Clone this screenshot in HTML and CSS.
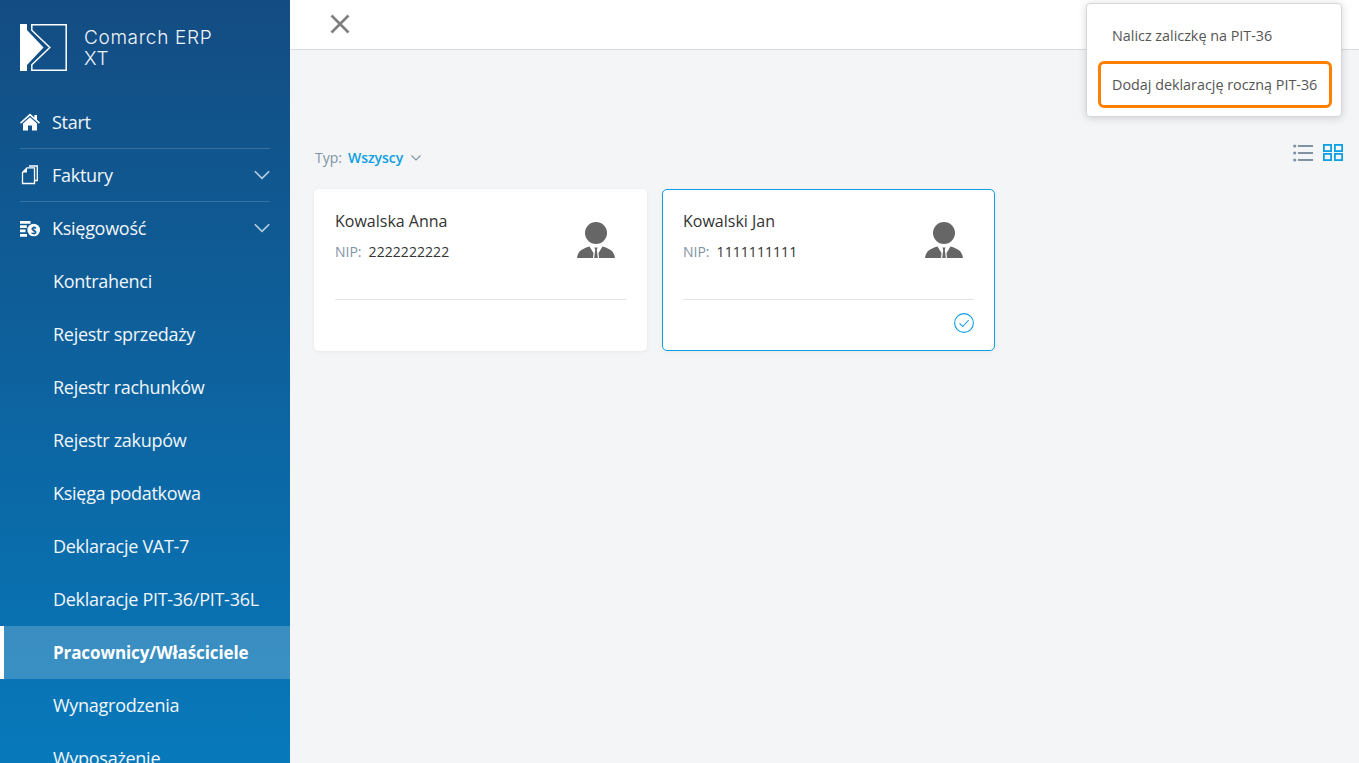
FILE: index.html
```html
<!DOCTYPE html>
<html lang="pl">
<head>
<meta charset="utf-8">
<title>Comarch ERP XT</title>
<link rel="stylesheet" href="styles.css">
</head>
<body>
<div class="app">
  <aside class="sidebar">
    <div class="brand">
      <svg class="brand-logo" width="47" height="47" viewBox="0 0 47 47">
        <path fill="#fff" d="M0 0h7v6L23.500 23.500 7 41v6H0z"/>
        <path fill="none" stroke="#fff" stroke-width="1.500" d="M11.800.8H46.200V46.200H11.800V40.800L29.800 23.500 11.800 6.200z"/>
      </svg>
      <div class="brand-name">Comarch ERP<br>XT</div>
    </div>
    <nav class="nav">
      <a class="nav-item main">
        <svg class="nav-icon" width="20" height="20" viewBox="0 0 20 20"><path fill="#fff" d="M10 1.500 0 10.500l1 1.200L10 3.800l9 7.900 1-1.200-3-2.700V3h-2.600v2.500zM10 5.300 3 11.500V18.500h5v-5h4v5h5v-7z"/></svg>
        <span>Start</span>
      </a>
      <a class="nav-item main">
        <svg class="nav-icon" width="20" height="20" viewBox="0 0 20 20"><path fill="none" stroke="#fff" stroke-width="1.300" d="M2.500 7.500 7 2.800h7.500v15.700h-12z"/><path fill="#fff" d="M2.500 7.500H7V3z"/><path fill="none" stroke="#fff" stroke-width="1.300" d="M9 1h8.300v14.500H15"/></svg>
        <span>Faktury</span>
        <svg class="chev" width="16" height="10" viewBox="0 0 16 10"><path fill="none" stroke="#b9cfe0" stroke-width="1.600" d="M.8 1.200 8 8.400l7.200-7.200"/></svg>
      </a>
      <a class="nav-item main last">
        <svg class="nav-icon" width="20" height="20" viewBox="0 0 20 20"><path fill="#fff" d="M0 3h10.500v2.700H0zM0 7.300h6.800V10H0zM0 11.600h5.500v2.700H0zM0 16h7v2.700H0z"/><circle cx="13.700" cy="12" r="6.300" fill="#fff"/><text x="13.700" y="15.600" class="dollar">$</text></svg>
        <span>Księgowość</span>
        <svg class="chev" width="16" height="10" viewBox="0 0 16 10"><path fill="none" stroke="#b9cfe0" stroke-width="1.600" d="M.8 1.200 8 8.400l7.200-7.200"/></svg>
      </a>
      <a class="nav-item sub">Kontrahenci</a>
      <a class="nav-item sub">Rejestr sprzedaży</a>
      <a class="nav-item sub">Rejestr rachunków</a>
      <a class="nav-item sub">Rejestr zakupów</a>
      <a class="nav-item sub">Księga podatkowa</a>
      <a class="nav-item sub">Deklaracje VAT-7</a>
      <a class="nav-item sub">Deklaracje PIT-36/PIT-36L</a>
      <a class="nav-item sub active">Pracownicy/Właściciele</a>
      <a class="nav-item sub">Wynagrodzenia</a>
      <a class="nav-item sub">Wyposażenie</a>
    </nav>
  </aside>
  <main class="content">
    <header class="topbar">
      <svg class="close" width="20" height="20" viewBox="0 0 20 20"><path fill="none" stroke="#7f7f7f" stroke-width="2.600" d="M1.500 1.500l17 17M18.500 1.500l-17 17"/></svg>
    </header>
    <div class="toolbar">
      <div class="filter">
        <span class="filter-label">Typ:</span>
        <span class="filter-value">Wszyscy</span>
        <svg width="10" height="6" viewBox="0 0 10 6"><path fill="none" stroke="#7f93a5" stroke-width="1.100" d="M.5.500 5 5 9.500.500"/></svg>
      </div>
      <div class="views">
        <svg width="20" height="18" viewBox="0 0 20 18"><g fill="#7f93a5"><circle cx="1.700" cy="2" r="1.600"/><circle cx="1.700" cy="9" r="1.600"/><circle cx="1.700" cy="16" r="1.600"/><rect x="5" y="1" width="15" height="2"/><rect x="5" y="8" width="15" height="2"/><rect x="5" y="15" width="15" height="2"/></g></svg>
        <svg width="20" height="17" viewBox="0 0 20 17"><g fill="none" stroke="#0f9fe3" stroke-width="1.800"><rect x=".9" y=".9" width="7.200" height="6.200"/><rect x="11.900" y=".9" width="7.200" height="6.200"/><rect x=".9" y="9.900" width="7.200" height="6.200"/><rect x="11.900" y="9.900" width="7.200" height="6.200"/></g></svg>
      </div>
    </div>
    <section class="cards">
      <article class="card">
        <div class="card-body">
          <div>
            <div class="card-name">Kowalska Anna</div>
            <div class="card-nip"><span class="nip-label">NIP:</span><span class="nip-value">2222222222</span></div>
          </div>
          <svg class="avatar" width="38" height="36" viewBox="0 0 38 36"><g fill="#666"><circle cx="19" cy="11" r="11"/><path d="M0 36C1 29.500 4 27 12.500 24.500L16.500 31 16 36zM38 36C37 29.500 34 27 25.500 24.500L21.500 31 22 36z"/><path d="M17.500 25.500h3l-.7 2.500 1 8h-3.600l1-8z"/></g></svg>
        </div>
        <div class="card-foot"></div>
      </article>
      <article class="card selected">
        <div class="card-body">
          <div>
            <div class="card-name">Kowalski Jan</div>
            <div class="card-nip"><span class="nip-label">NIP:</span><span class="nip-value">1111111111</span></div>
          </div>
          <svg class="avatar" width="38" height="36" viewBox="0 0 38 36"><g fill="#666"><circle cx="19" cy="11" r="11"/><path d="M0 36C1 29.500 4 27 12.500 24.500L16.500 31 16 36zM38 36C37 29.500 34 27 25.500 24.500L21.500 31 22 36z"/><path d="M17.500 25.500h3l-.7 2.500 1 8h-3.600l1-8z"/></g></svg>
        </div>
        <div class="card-foot">
          <svg width="20" height="20" viewBox="0 0 20 20"><circle cx="10" cy="10" r="9.400" fill="none" stroke="#0f9fe3" stroke-width="1.100"/><path fill="none" stroke="#0f9fe3" stroke-width="1.100" d="M5.500 10.300l3.200 3.200 6-6.500"/></svg>
        </div>
      </article>
    </section>
  </main>
  <div class="menu">
    <div class="menu-item">Nalicz zaliczkę na PIT-36</div>
    <div class="menu-item focus">Dodaj deklarację roczną PIT-36</div>
  </div>
</div>
</body>
</html>
```
FILE: styles.css
```css
* { box-sizing: border-box; }
html, body { margin: 0; height: 100%; overflow: hidden; }
body { font-family: "Open Sans", sans-serif; background: #f4f5f7; }
.app { display: flex; height: 763px; position: relative; overflow: hidden; }
.sidebar {
  width: 290px; flex: none; height: 763px; overflow: hidden; color: #fff;
  background: linear-gradient(180deg, #134c82 0%, #0779bb 100%);
}
.brand { height: 96px; padding: 24px 0 0 20px; display: flex; align-items: flex-start; gap: 17px; }
.brand-logo { flex: none; }
.brand-name { font-family: "Inter", sans-serif; font-weight: 300; font-size: 19px; letter-spacing: .65px; line-height: 21px; margin-top: 3px; color: #eef4f9; }
.nav { display: flex; flex-direction: column; }
.nav-item { height: 53px; flex: none; display: flex; align-items: center; font-size: 18px; letter-spacing: -0.28px; color: #f2f6fa; }
.main { margin: 0 20px; gap: 12px; border-bottom: 1px solid rgba(255,255,255,.16); }
.main.last { border-bottom: 0; padding-bottom: 2px; }
.main span { flex: 1; }
.nav-icon { flex: none; }
.chev { flex: none; }
.dollar { font-family: "Open Sans", sans-serif; font-size: 10px; font-weight: 700; fill: #125a94; text-anchor: middle; }
.sub { padding-left: 53px; padding-bottom: 2px; }
.active { padding-left: 49px; padding-bottom: 0; border-left: 4px solid #fff; background: rgba(255,255,255,.2); font-weight: 700; font-size: 17px; letter-spacing: -0.1px; color: #fff; }
.content { flex: 1; min-width: 0; }
.topbar { height: 50px; background: #fff; border-bottom: 1px solid #d9dbde; padding: 14px 0 0 40px; }
.close { display: block; }
.toolbar { display: flex; justify-content: space-between; align-items: center; height: 30px; margin-top: 87px; padding: 0 16px 0 25px; }
.filter { display: flex; align-items: center; gap: 6px; font-size: 14px; margin-top: 10px; }
.filter svg { margin-left: 2px; margin-top: 2px; }
.filter-label { color: #7f93a5; }
.filter-value { color: #0f9fe3; font-weight: 600; letter-spacing: -.05px; }
.views { display: flex; gap: 10px; align-items: center; margin-top: 1px; }
.cards { display: flex; gap: 15px; padding: 22px 0 0 24px; }
.card { width: 333px; height: 162px; background: #fff; border-radius: 5px; padding: 20px 21px 0; box-shadow: 0 1px 4px rgba(0,0,0,.06); }
.selected { border: 1px solid #0f9fe3; padding: 19px 20px 0; }
.card-body { height: 91px; display: flex; justify-content: space-between; align-items: flex-start; border-bottom: 1px solid #e2e3e5; }
.card-name { font-size: 16px; line-height: 24px; color: #333; }
.card-nip { margin-top: 8px; display: flex; gap: 7px; font-size: 14px; line-height: 22px; color: #333; }
.nip-label { color: #7f93a5; }
.nip-value { letter-spacing: .06px; }
.avatar { margin: 13px 11px 0 0; }
.card-foot { display: flex; justify-content: flex-end; padding-top: 13px; }
.menu {
  position: absolute; left: 1086px; top: 3px; width: 256px; height: 114px; background: #fff; border: 1px solid #d6d7da; border-radius: 4px;
  padding: 9px 9px 8px 11px; box-shadow: 0 1px 8px rgba(0,0,0,.16); display: flex; flex-direction: column; gap: 4px;
}
.menu-item { height: 44px; display: flex; align-items: center; padding-left: 14px; font-size: 14.35px; color: #555; flex: none; }
.focus { height: 47px; border: 3px solid #ff8000; border-radius: 6px; padding-left: 11px; }
```
